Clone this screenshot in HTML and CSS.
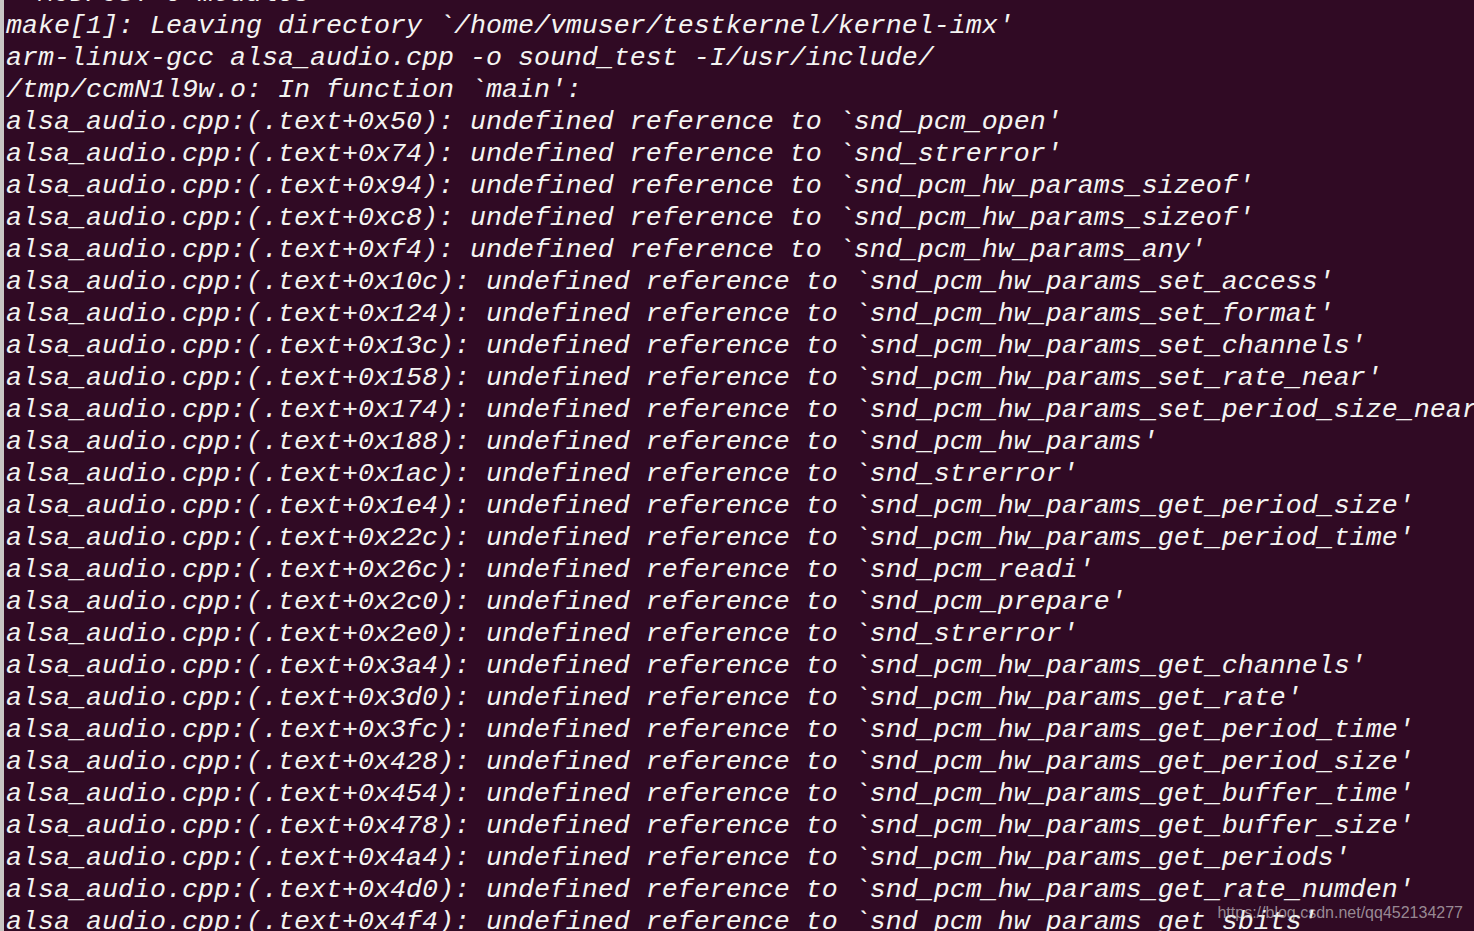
FILE: index.html
```html
<!DOCTYPE html>
<html>
<head>
<meta charset="utf-8">
<link rel="stylesheet" href="styles.css">
</head>
<body>
<div class="window">
<div class="edge"></div>
<pre class="term">  MODPOST 0 modules
make[1]: Leaving directory `/home/vmuser/testkernel/kernel-imx'
arm-linux-gcc alsa_audio.cpp -o sound_test -I/usr/include/
/tmp/ccmN1l9w.o: In function `main':
alsa_audio.cpp:(.text+0x50): undefined reference to `snd_pcm_open'
alsa_audio.cpp:(.text+0x74): undefined reference to `snd_strerror'
alsa_audio.cpp:(.text+0x94): undefined reference to `snd_pcm_hw_params_sizeof'
alsa_audio.cpp:(.text+0xc8): undefined reference to `snd_pcm_hw_params_sizeof'
alsa_audio.cpp:(.text+0xf4): undefined reference to `snd_pcm_hw_params_any'
alsa_audio.cpp:(.text+0x10c): undefined reference to `snd_pcm_hw_params_set_access'
alsa_audio.cpp:(.text+0x124): undefined reference to `snd_pcm_hw_params_set_format'
alsa_audio.cpp:(.text+0x13c): undefined reference to `snd_pcm_hw_params_set_channels'
alsa_audio.cpp:(.text+0x158): undefined reference to `snd_pcm_hw_params_set_rate_near'
alsa_audio.cpp:(.text+0x174): undefined reference to `snd_pcm_hw_params_set_period_size_near'
alsa_audio.cpp:(.text+0x188): undefined reference to `snd_pcm_hw_params'
alsa_audio.cpp:(.text+0x1ac): undefined reference to `snd_strerror'
alsa_audio.cpp:(.text+0x1e4): undefined reference to `snd_pcm_hw_params_get_period_size'
alsa_audio.cpp:(.text+0x22c): undefined reference to `snd_pcm_hw_params_get_period_time'
alsa_audio.cpp:(.text+0x26c): undefined reference to `snd_pcm_readi'
alsa_audio.cpp:(.text+0x2c0): undefined reference to `snd_pcm_prepare'
alsa_audio.cpp:(.text+0x2e0): undefined reference to `snd_strerror'
alsa_audio.cpp:(.text+0x3a4): undefined reference to `snd_pcm_hw_params_get_channels'
alsa_audio.cpp:(.text+0x3d0): undefined reference to `snd_pcm_hw_params_get_rate'
alsa_audio.cpp:(.text+0x3fc): undefined reference to `snd_pcm_hw_params_get_period_time'
alsa_audio.cpp:(.text+0x428): undefined reference to `snd_pcm_hw_params_get_period_size'
alsa_audio.cpp:(.text+0x454): undefined reference to `snd_pcm_hw_params_get_buffer_time'
alsa_audio.cpp:(.text+0x478): undefined reference to `snd_pcm_hw_params_get_buffer_size'
alsa_audio.cpp:(.text+0x4a4): undefined reference to `snd_pcm_hw_params_get_periods'
alsa_audio.cpp:(.text+0x4d0): undefined reference to `snd_pcm_hw_params_get_rate_numden'
alsa_audio.cpp:(.text+0x4f4): undefined reference to `snd_pcm_hw_params_get_sbits'</pre>
<div class="watermark">https://blog.csdn.net/qq452134277</div>
</div>
</body>
</html>
```
FILE: styles.css
```css
html, body {
  margin: 0;
  padding: 0;
  background: #300a24;
  overflow: hidden;
}
.window {
  position: relative;
  display: flex;
  width: 1474px;
  height: 931px;
  overflow: hidden;
  background: #300a24;
}
.edge {
  flex: 0 0 4px;
  background: #c8c6c4;
}
.term {
  margin: -22px 0 0 0;
  padding: 0 0 0 2px;
  font-family: "Liberation Mono", monospace;
  font-style: italic;
  font-size: 26.67px;
  line-height: 32px;
  color: #f4f4f2;
  white-space: pre;
  overflow: hidden;
}
.watermark {
  position: absolute;
  right: 11px;
  bottom: 9px;
  font-family: "Liberation Sans", Arial, sans-serif;
  font-size: 16px;
  color: rgba(220, 220, 220, 0.62);
  white-space: nowrap;
}
```
